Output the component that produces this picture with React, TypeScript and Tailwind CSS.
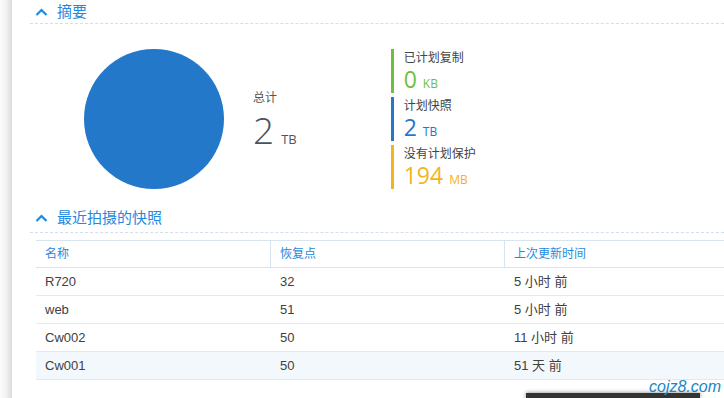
import React from "react";

const cjk = "font-['Liberation_Sans','Noto_Sans_CJK_SC',sans-serif]";
const num = "font-['Open_Sans','Noto_Sans_CJK_SC',sans-serif]";

function Chevron() {
  return (
    <svg width="13" height="8" viewBox="0 0 13 8" className="shrink-0">
      <polyline
        points="1.5,7 6.5,2 11.5,7"
        fill="none"
        stroke="#1f8ae0"
        strokeWidth="2.2"
      />
    </svg>
  );
}

function SectionHeader({ title, h }: { title: string; h: string }) {
  return (
    <div
      className={`flex items-center gap-[9px] border-b border-dashed border-[#d3dfea] pl-[5px] ${h}`}
    >
      <Chevron />
      <span className="text-[15px] leading-none text-[#1f8ae0]">{title}</span>
    </div>
  );
}

const legend = [
  { label: "已计划复制", value: "0", unit: "KB", text: "text-[#6fbf3f]", bar: "bg-[#6fbf3f]" },
  { label: "计划快照", value: "2", unit: "TB", text: "text-[#2578c8]", bar: "bg-[#2578c8]" },
  { label: "没有计划保护", value: "194", unit: "MB", text: "text-[#f7b21b]", bar: "bg-[#f7b21b]" },
];

const rows = [
  { name: "R720", point: "32", time: "5 小时 前" },
  { name: "web", point: "51", time: "5 小时 前" },
  { name: "Cw002", point: "50", time: "11 小时 前" },
  { name: "Cw001", point: "50", time: "51 天 前" },
];

export default function App() {
  return (
    <div className={`relative flex h-[398px] w-[724px] overflow-hidden bg-white ${cjk}`}>
      <div className="w-[12px] shrink-0 bg-gradient-to-r from-[#fcfcfc] via-[#f2f2f2] to-[#dcdcdc]" />
      <div className="min-w-0 flex-1 pl-[18px]">
        <SectionHeader title="摘要" h="h-[24px]" />

        <div className="flex h-[179px] items-center pt-[10px]">
          <div className="ml-[54px] h-[140px] w-[140px] shrink-0 rounded-full bg-[#2478c9]" />
          <div className="ml-[29px] mt-[8px] flex flex-col">
            <span className="text-[12px] leading-[14px] text-[#555]">总计</span>
            <div className="flex items-baseline gap-[7px]">
              <span className={`${num} text-[37px] font-light leading-[50px] text-[#4a535c]`}>2</span>
              <span className={`${num} text-[13px] text-[#555]`}>TB</span>
            </div>
          </div>
          <div className="ml-[94px] flex flex-col gap-[4px]">
            {legend.map((l) => (
              <div key={l.label} className="flex h-[44px]">
                <div className={`w-[3px] ${l.bar}`} />
                <div className="ml-[10px] flex flex-col">
                  <span className="mt-[2px] text-[12px] leading-[14px] text-[#444]">{l.label}</span>
                  <div className={`flex items-baseline gap-[6px] ${l.text}`}>
                    <span className={`${num} text-[23px] leading-[28px]`}>{l.value}</span>
                    <span className={`${num} text-[12px]`}>{l.unit}</span>
                  </div>
                </div>
              </div>
            ))}
          </div>
        </div>

        <SectionHeader title="最近拍摄的快照" h="h-[30px]" />

        <div className="ml-[6px] mt-[7px] w-[702px] text-[13px]">
          <div className="grid h-[28px] grid-cols-3 border-y border-[#d8e4ee] text-[12px] text-[#1f8ae0]">
            <div className="flex items-center pl-[9px]">名称</div>
            <div className="flex items-center border-l border-[#d8e4ee] pl-[9px]">恢复点</div>
            <div className="flex items-center border-l border-[#d8e4ee] pl-[9px]">上次更新时间</div>
          </div>
          {rows.map((r, i) => (
            <div
              key={r.name}
              className={`grid h-[28px] grid-cols-3 border-b border-[#e6e9ec] text-[#404040] ${
                i === rows.length - 1 ? "bg-[#f3f8fd]" : ""
              }`}
            >
              <div className="flex items-center pl-[9px]">{r.name}</div>
              <div className="flex items-center pl-[10px]">{r.point}</div>
              <div className="flex items-center pl-[10px]">{r.time}</div>
            </div>
          ))}
        </div>
      </div>

      <div className="absolute bottom-0 left-[526px] h-[5px] w-[174px] bg-[#333] shadow-[0_0_4px_rgba(0,0,0,0.5)]" />
      <span className="absolute bottom-[3px] left-[649px] font-['Liberation_Sans',sans-serif] text-[16px] italic leading-none text-[#1a86c4]">
        cojz8.com
      </span>
    </div>
  );
}
